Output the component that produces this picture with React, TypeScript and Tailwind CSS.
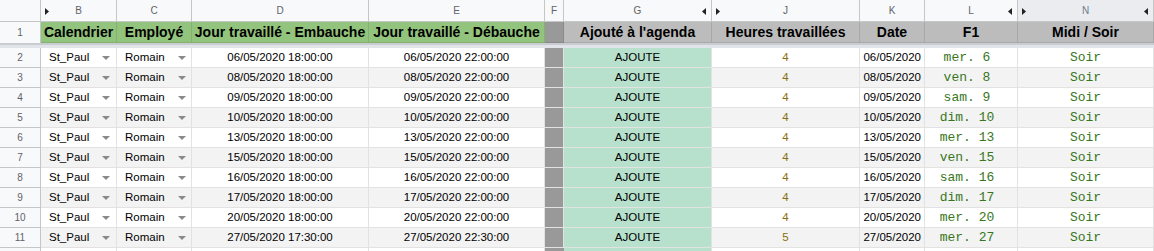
import React from "react";

const COLS =
  "grid grid-cols-[41px_76px_75px_177px_176px_19px_148px_148px_65px_93px_136px]";

const ROWS = [
  { n: 2, start: "06/05/2020 18:00:00", end: "06/05/2020 22:00:00", h: "4", date: "06/05/2020", f1: "mer. 6" },
  { n: 3, start: "08/05/2020 18:00:00", end: "08/05/2020 22:00:00", h: "4", date: "08/05/2020", f1: "ven. 8" },
  { n: 4, start: "09/05/2020 18:00:00", end: "09/05/2020 22:00:00", h: "4", date: "09/05/2020", f1: "sam. 9" },
  { n: 5, start: "10/05/2020 18:00:00", end: "10/05/2020 22:00:00", h: "4", date: "10/05/2020", f1: "dim. 10" },
  { n: 6, start: "13/05/2020 18:00:00", end: "13/05/2020 22:00:00", h: "4", date: "13/05/2020", f1: "mer. 13" },
  { n: 7, start: "15/05/2020 18:00:00", end: "15/05/2020 22:00:00", h: "4", date: "15/05/2020", f1: "ven. 15" },
  { n: 8, start: "16/05/2020 18:00:00", end: "16/05/2020 22:00:00", h: "4", date: "16/05/2020", f1: "sam. 16" },
  { n: 9, start: "17/05/2020 18:00:00", end: "17/05/2020 22:00:00", h: "4", date: "17/05/2020", f1: "dim. 17" },
  { n: 10, start: "20/05/2020 18:00:00", end: "20/05/2020 22:00:00", h: "4", date: "20/05/2020", f1: "mer. 20" },
  { n: 11, start: "27/05/2020 17:30:00", end: "27/05/2020 22:30:00", h: "5", date: "27/05/2020", f1: "mer. 27" },
];

function Caret() {
  return (
    <svg width="8" height="4" viewBox="0 0 8 4" className="shrink-0">
      <path d="M0 0h8L4 4z" fill="#8a8a8a" />
    </svg>
  );
}

function Tri({ dir }: { dir: "left" | "right" }) {
  return (
    <svg width="4" height="7" viewBox="0 0 4 7">
      {dir === "right" ? <path d="M0 0l4 3.5L0 7z" fill="#222" /> : <path d="M4 0L0 3.5 4 7z" fill="#222" />}
    </svg>
  );
}

function ColHead({ label, left, right, bg = "bg-[#f8f9fa]", color = "text-[#5f6368]" }: { label: string; left?: boolean; right?: boolean; bg?: string; color?: string }) {
  return (
    <div className={`relative flex items-center justify-center border-r border-b border-[#c4c7c5] ${bg} ${color} text-[10px]`}>
      {left && (
        <span className="absolute left-[4px] top-[8px] flex">
          <Tri dir="right" />
        </span>
      )}
      {label}
      {right && (
        <span className="absolute right-[5px] top-[8px] flex">
          <Tri dir="left" />
        </span>
      )}
    </div>
  );
}

export default function App() {
  const cell = "flex items-center border-r border-b border-[#e2e2e2] whitespace-nowrap overflow-hidden";
  const head = "flex items-center justify-center border-r border-b border-black/10 font-bold text-[14px] text-black whitespace-nowrap overflow-hidden";
  return (
    <div className="h-[251px] w-[1154px] overflow-hidden bg-white text-black font-['Liberation_Sans',Arial,sans-serif] text-[11.5px]">
      <div className={`${COLS} h-[22px]`}>
        <div className="border-r border-b border-[#c4c7c5] bg-[#f8f9fa]" />
        <ColHead label="B" left />
        <ColHead label="C" />
        <ColHead label="D" />
        <ColHead label="E" />
        <ColHead label="F" />
        <ColHead label="G" right />
        <ColHead label="J" left />
        <ColHead label="K" />
        <ColHead label="L" right />
        <ColHead label="N" left right bg="bg-[#eaecef]" color="text-[#6d7b96]" />
      </div>

      <div className={`${COLS} h-[21px]`}>
        <div className="flex items-center justify-center border-r border-[#c4c7c5] bg-[#f8f9fa] text-[10px] text-[#5f6368]">1</div>
        <div className={`${head} bg-[#93c47d]`}>Calendrier</div>
        <div className={`${head} bg-[#93c47d]`}>Employé</div>
        <div className={`${head} bg-[#93c47d]`}>Jour travaillé - Embauche</div>
        <div className={`${head} bg-[#93c47d]`}>Jour travaillé - Débauche</div>
        <div className={`${head} bg-[#999999]`} />
        <div className={`${head} bg-[#bcbcbc]`}>Ajouté à l'agenda</div>
        <div className={`${head} bg-[#bcbcbc]`}>Heures travaillées</div>
        <div className={`${head} bg-[#bcbcbc]`}>Date</div>
        <div className={`${head} bg-[#bcbcbc]`}>F1</div>
        <div className={`${head} bg-[#bcbcbc]`}>Midi / Soir</div>
      </div>

      <div className="h-[5px] border-t-2 border-[#c9ccd0] bg-[#e1e4e8]" />

      {ROWS.map((r, i) => {
        const band = i % 2 === 1 ? "bg-[#f3f3f3]" : "bg-white";
        return (
          <div key={r.n} className={`${COLS} h-[20px]`}>
            <div className="flex items-center justify-center border-r border-b border-[#c4c7c5] bg-[#f8f9fa] text-[10px] text-[#5f6368]">{r.n}</div>
            <div className={`${cell} ${band} justify-between pl-[8px] pr-[6px]`}>
              St_Paul
              <Caret />
            </div>
            <div className={`${cell} ${band} justify-between pl-[8px] pr-[5px]`}>
              Romain
              <Caret />
            </div>
            <div className={`${cell} ${band} justify-center`}>{r.start}</div>
            <div className={`${cell} ${band} justify-center`}>{r.end}</div>
            <div className={`${cell} bg-[#999999]`} />
            <div className={`${cell} bg-[#b7e1cd] justify-center`}>AJOUTE</div>
            <div className={`${cell} ${band} justify-center text-[#8a6d0b]`}>{r.h}</div>
            <div className={`${cell} ${band} justify-end pr-[3px]`}>{r.date}</div>
            <div className={`${cell} ${band} justify-center pr-[8px] font-['Liberation_Mono',monospace] text-[13px] text-[#38761d]`}>{r.f1}</div>
            <div className={`${cell} ${band} justify-center font-['Liberation_Mono',monospace] text-[13px] text-[#38761d]`}>Soir</div>
          </div>
        );
      })}

      <div className={`${COLS} h-[20px]`}>
        <div className="border-r border-[#c4c7c5] bg-[#f8f9fa]" />
        <div className="border-r border-[#e2e2e2]" />
        <div className="border-r border-[#e2e2e2]" />
        <div className="border-r border-[#e2e2e2]" />
        <div className="border-r border-[#e2e2e2]" />
        <div className="bg-[#999999]" />
        <div className="border-r border-[#e2e2e2] bg-[#b7e1cd]" />
        <div className="border-r border-[#e2e2e2]" />
        <div className="border-r border-[#e2e2e2]" />
        <div className="border-r border-[#e2e2e2]" />
        <div className="border-r border-[#e2e2e2]" />
      </div>
    </div>
  );
}
